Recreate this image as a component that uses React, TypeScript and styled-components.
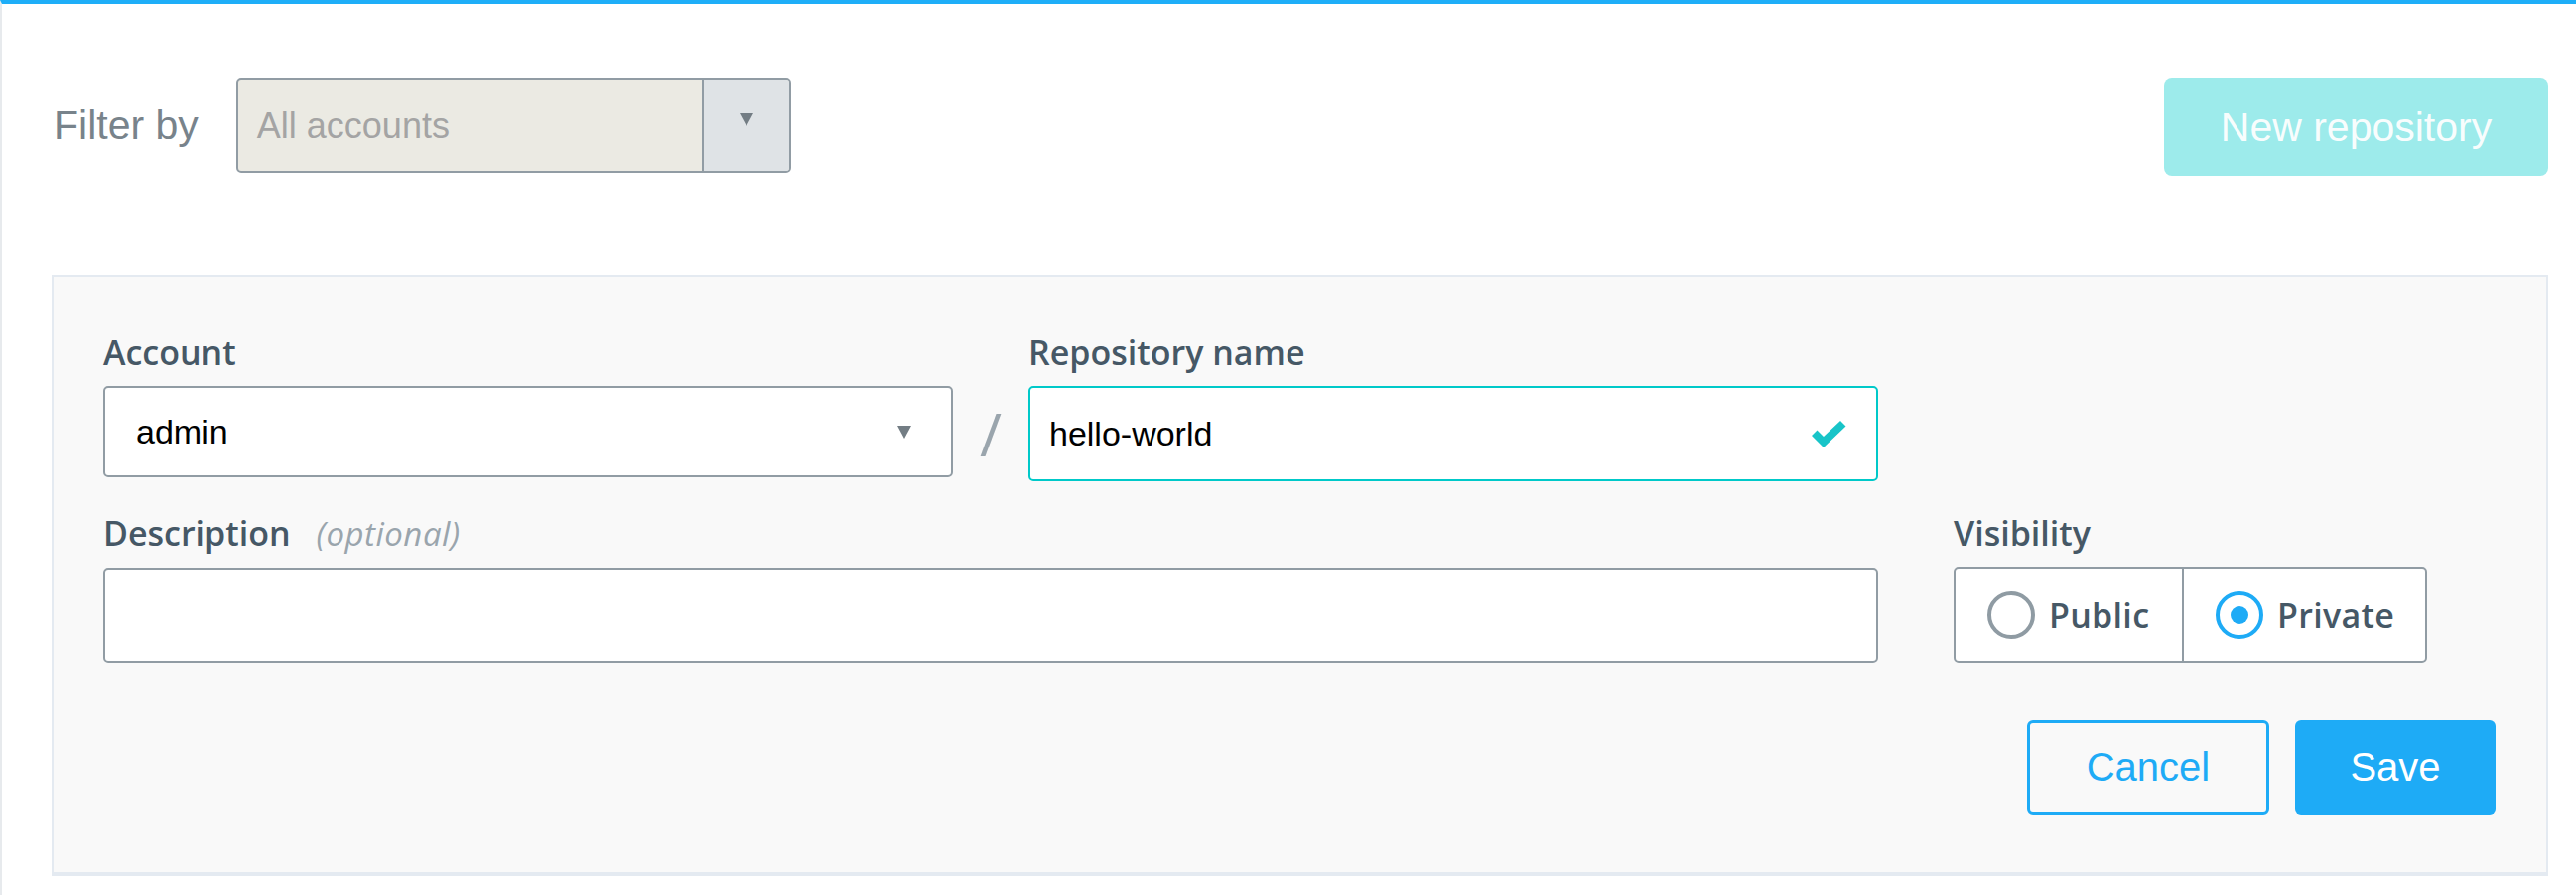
import React from 'react';
import styled, {createGlobalStyle} from 'styled-components';

const GlobalStyle = createGlobalStyle`
  html, body {
    margin: 0;
    padding: 0;
    background: #fff;
  }
  * {
    box-sizing: border-box;
  }
`;

const Page = styled.div`
  min-height: 902px;
  border-top: 4px solid #1eaef8;
  border-left: 2px solid #e7eaed;
  padding: 75px 28px 0 50px;
  font-family: 'Liberation Sans', Arial, sans-serif;
`;

const Toolbar = styled.div`
  display: flex;
  justify-content: space-between;
  align-items: flex-start;
`;

const FilterGroup = styled.div`
  display: flex;
  align-items: flex-start;
  gap: 38px;
`;

const FilterLabel = styled.span`
  height: 95px;
  display: flex;
  align-items: center;
  padding-left: 2px;
  font-size: 41px;
  color: #78838b;
`;

const FilterSelect = styled.div`
  width: 559px;
  height: 95px;
  display: flex;
  border: 2px solid #919ca4;
  border-radius: 5px;
  background: #ebeae3;
  overflow: hidden;
`;

const FilterValue = styled.div`
  flex: 1;
  display: flex;
  align-items: center;
  padding-left: 19px;
  font-size: 36px;
  color: #a4a4a4;
`;

const FilterArrow = styled.div`
  width: 88px;
  display: flex;
  justify-content: center;
  padding-top: 33px;
  border-left: 2px solid #919ca4;
  background: #dfe3e6;
`;

const NewButton = styled.button`
  width: 387px;
  height: 98px;
  border: none;
  border-radius: 8px;
  background: #9debeb;
  color: rgba(255, 255, 255, 0.94);
  font-family: 'Liberation Sans', Arial, sans-serif;
  font-size: 41px;
  padding: 0;
`;

const Panel = styled.section`
  margin-top: 100px;
  border: 2px solid #e4eaf1;
  border-bottom-width: 4px;
  background: #f9f9f9;
  padding: 53px 51px 58px 50px;
`;

const Row = styled.div<{$gap?: number}>`
  display: flex;
  align-items: flex-start;
  margin-top: ${p => p.$gap ?? 0}px;
`;

const Field = styled.div<{$width: number; $offset?: number}>`
  width: ${p => p.$width}px;
  margin-left: ${p => p.$offset ?? 0}px;
  display: flex;
  flex-direction: column;
`;

const Label = styled.label`
  font-family: 'Open Sans', 'Noto Sans', sans-serif;
  font-weight: 600;
  font-size: 34px;
  line-height: 46px;
  color: #465866;
  margin-bottom: 11px;
`;

const Optional = styled.span`
  font-weight: 400;
  font-style: italic;
  font-size: 33px;
  letter-spacing: 0.5px;
  color: #9aa5ad;
  margin-left: 26px;
`;

const SelectBox = styled.div`
  height: 92px;
  display: flex;
  align-items: center;
  justify-content: space-between;
  padding: 0 40px 0 31px;
  border: 2px solid #919ca4;
  border-radius: 5px;
  background: #fff;
  font-size: 34px;
  color: #000;
`;

const TextBox = styled.div<{$valid?: boolean}>`
  height: 96px;
  display: flex;
  align-items: center;
  justify-content: space-between;
  padding: 0 30px 0 19px;
  border: 2px solid ${p => (p.$valid ? '#00c9c9' : '#919ca4')};
  border-radius: 5px;
  background: #fff;
  font-size: 34px;
  color: #000;
`;

const Slash = styled.div`
  width: 76px;
  height: 96px;
  margin-top: 57px;
  display: flex;
  align-items: center;
  justify-content: center;
  font-family: 'Open Sans', 'Noto Sans', sans-serif;
  font-weight: 400;
  font-size: 60px;
  color: #9aa5ad;
`;

const RadioGroup = styled.div`
  height: 97px;
  display: flex;
  border: 2px solid #919ca4;
  border-radius: 5px;
  background: #fff;
`;

const RadioOption = styled.div<{$width: number; $divider?: boolean}>`
  width: ${p => p.$width}px;
  display: flex;
  align-items: center;
  gap: 14px;
  padding-left: 32px;
  border-left: ${p => (p.$divider ? '2px solid #919ca4' : 'none')};
  font-family: 'Open Sans', 'Noto Sans', sans-serif;
  font-weight: 600;
  font-size: 34px;
  letter-spacing: 0.3px;
  color: #465866;
`;

const RadioCircle = styled.span<{$checked?: boolean}>`
  width: 48px;
  height: 48px;
  border-radius: 50%;
  border: 4px solid ${p => (p.$checked ? '#1eabf6' : '#8f9ba3')};
  display: flex;
  align-items: center;
  justify-content: center;

  &::after {
    content: '';
    display: ${p => (p.$checked ? 'block' : 'none')};
    width: 18px;
    height: 18px;
    border-radius: 50%;
    background: #1eabf6;
  }
`;

const Actions = styled.div`
  display: flex;
  justify-content: flex-end;
  gap: 26px;
  margin-top: 58px;
`;

const Button = styled.button<{$primary?: boolean}>`
  height: 95px;
  width: ${p => (p.$primary ? 202 : 244)}px;
  border: ${p => (p.$primary ? 'none' : '3px solid #1eabf6')};
  border-radius: 6px;
  background: ${p => (p.$primary ? '#1eabf6' : 'transparent')};
  color: ${p => (p.$primary ? '#fff' : '#1eabf6')};
  font-family: 'Liberation Sans', Arial, sans-serif;
  font-size: 40px;
  padding: 0;
`;

const Caret = () => (
  <svg width="14" height="13" viewBox="0 0 14 13">
    <polygon points="0,0 14,0 7,13" fill="#737d84" />
  </svg>
);

const Check = () => (
  <svg width="36" height="27" viewBox="0 0 36 27">
    <polygon points="1,15 6.5,9.5 13,16 30,0 35.5,5.5 13,27" fill="#18c4c8" />
  </svg>
);

export default function App() {
  return (
    <>
      <GlobalStyle />
      <Page>
        <Toolbar>
          <FilterGroup>
            <FilterLabel>Filter by</FilterLabel>
            <FilterSelect>
              <FilterValue>All accounts</FilterValue>
              <FilterArrow>
                <Caret />
              </FilterArrow>
            </FilterSelect>
          </FilterGroup>
          <NewButton>New repository</NewButton>
        </Toolbar>

        <Panel>
          <Row>
            <Field $width={856}>
              <Label>Account</Label>
              <SelectBox>
                <span>admin</span>
                <Caret />
              </SelectBox>
            </Field>
            <Slash>/</Slash>
            <Field $width={856}>
              <Label>Repository name</Label>
              <TextBox $valid>
                <span>hello-world</span>
                <Check />
              </TextBox>
            </Field>
          </Row>

          <Row $gap={29}>
            <Field $width={1788}>
              <Label>
                Description<Optional>(optional)</Optional>
              </Label>
              <TextBox />
            </Field>
            <Field $width={477} $offset={76}>
              <Label>Visibility</Label>
              <RadioGroup>
                <RadioOption $width={228}>
                  <RadioCircle />
                  Public
                </RadioOption>
                <RadioOption $width={245} $divider>
                  <RadioCircle $checked />
                  Private
                </RadioOption>
              </RadioGroup>
            </Field>
          </Row>

          <Actions>
            <Button>Cancel</Button>
            <Button $primary>Save</Button>
          </Actions>
        </Panel>
      </Page>
    </>
  );
}
